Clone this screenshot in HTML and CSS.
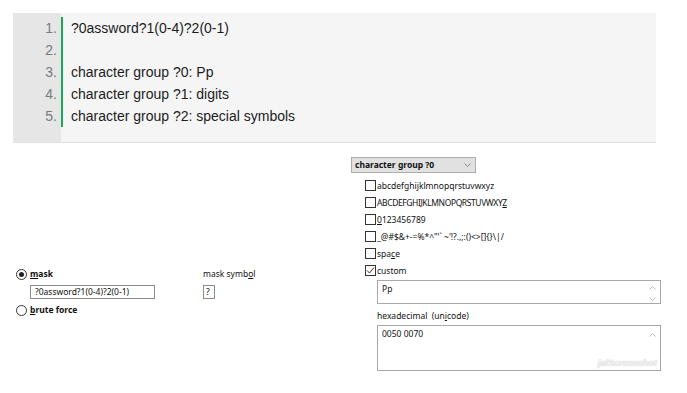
FILE: index.html
```html
<!DOCTYPE html>
<html>
<head>
<meta charset="utf-8">
<link rel="stylesheet" href="styles.css">
</head>
<body>
<div class="code">
  <div class="gutter">
    <div>1.</div><div>2.</div><div>3.</div><div>4.</div><div>5.</div>
  </div>
  <div class="lines">
    <div>?0assword?1(0-4)?2(0-1)</div>
    <div>&nbsp;</div>
    <div>character group ?0: Pp</div>
    <div>character group ?1: digits</div>
    <div>character group ?2: special symbols</div>
  </div>
</div>

<div class="lower">
  <div class="left">
    <div class="col-main">
      <div class="radio-row"><span class="radio checked"></span><b><u>m</u>ask</b></div>
      <div class="text-input wide">?0assword?1(0-4)?2(0-1)</div>
      <div class="radio-row"><span class="radio"></span><b><u>b</u>rute force</b></div>
    </div>
    <div class="col-sym">
      <div class="sym-label">mask symb<u>o</u>l</div>
      <div class="text-input tiny">?</div>
    </div>
  </div>

  <div class="right">
    <div class="select">
      <span>character group ?0</span>
      <svg class="chev" width="7" height="4" viewBox="0 0 7 4"><path d="M0.5 0.5 L3.5 3.5 L6.5 0.5" fill="none" stroke="#8a8a8a" stroke-width="1"/></svg>
    </div>
    <ul class="checks">
      <li><span class="cb"></span><span>abcdefghijklmnopqrstuvwxyz</span></li>
      <li><span class="cb"></span><span class="upper">ABCDEFGHIJKLMNOPQRSTUVWXY<u>Z</u></span></li>
      <li><span class="cb"></span><span><u>0</u>123456789</span></li>
      <li><span class="cb"></span><span>_@#$&amp;+-=%*^"'` ~'!?.,;:()&lt;&gt;[]{}\|/</span></li>
      <li><span class="cb"></span><span>spa<u>c</u>e</span></li>
      <li><span class="cb checked"><svg width="9" height="9" viewBox="0 0 9 9"><path d="M1 4.5 L3.5 7 L8 1.5" fill="none" stroke="#333" stroke-width="1"/></svg></span><span>custom</span></li>
    </ul>
    <div class="area short">
      <span>Pp</span>
      <div class="scroll">
        <svg width="7" height="4" viewBox="0 0 7 4"><path d="M0.5 3.5 L3.5 0.5 L6.5 3.5" fill="none" stroke="#bdbdbd"/></svg>
        <svg width="7" height="4" viewBox="0 0 7 4"><path d="M0.5 0.5 L3.5 3.5 L6.5 0.5" fill="none" stroke="#bdbdbd"/></svg>
      </div>
    </div>
    <div class="hex-label">hexadecimal&nbsp; (un<u>i</u>code)</div>
    <div class="area tall">
      <span>0050 0070</span>
      <div class="scroll">
        <svg width="7" height="4" viewBox="0 0 7 4"><path d="M0.5 3.5 L3.5 0.5 L6.5 3.5" fill="none" stroke="#bdbdbd"/></svg>
      </div>
      <span class="watermark">jalScreenshot</span>
    </div>
  </div>
</div>
</body>
</html>
```

FILE: styles.css
```css
html, body {
  margin: 0;
  padding: 0;
  background: #ffffff;
}

body {
  font-family: "Noto Sans", "Open Sans", sans-serif;
  color: #111111;
}

/* code block */
.code {
  display: flex;
  margin: 13px 31px 0 13px;
  background: #f5f5f5;
  border-bottom: 1px solid #e0e0e0;
  font: 14px/22px "Liberation Sans", Arial, sans-serif;
}

.gutter {
  width: 48px;
  box-sizing: border-box;
  background: #e6e6e6;
  padding: 4px 4px 15px 0;
  text-align: right;
  color: #7a7a7a;
}

.lines {
  flex: 1;
  margin: 4px 0 15px;
  padding-left: 8px;
  border-left: 2px solid #18a85a;
  color: #1c1c1c;
}

/* lower form */
.lower {
  display: flex;
  margin-top: 14px;
  font-size: 8.5px;
  line-height: 14px;
}

.left {
  width: 351px;
  box-sizing: border-box;
  padding: 110px 0 0 16px;
  display: flex;
}

.col-main {
  width: 187px;
}

.radio-row {
  display: flex;
  align-items: center;
  gap: 3px;
  height: 14px;
}

.radio {
  width: 11px;
  height: 11px;
  box-sizing: border-box;
  border: 1px solid #333;
  border-radius: 50%;
  background: #fff;
  display: flex;
  align-items: center;
  justify-content: center;
}

.radio.checked::after {
  content: "";
  width: 5px;
  height: 5px;
  border-radius: 50%;
  background: #222;
}

.text-input {
  height: 14px;
  box-sizing: border-box;
  border: 1px solid #8c8c8c;
  padding-left: 4px;
  line-height: 12px;
  background: #fff;
  margin: 4px 0;
}

.text-input.wide {
  width: 125px;
  margin-left: 14px;
}

.text-input.tiny {
  width: 12px;
  padding-left: 2px;
}

.sym-label {
  height: 14px;
}

.right {
  width: 310px;
}

.select {
  width: 125px;
  height: 16px;
  box-sizing: border-box;
  border: 1px solid #adadad;
  background: #e1e1e1;
  display: flex;
  align-items: center;
  justify-content: space-between;
  padding: 0 4px 0 3px;
  font-weight: bold;
}

.checks {
  list-style: none;
  margin: 4px 0 0 14px;
  padding: 0;
}

.checks li {
  height: 17px;
  display: flex;
  align-items: center;
  gap: 1px;
}

.upper {
  letter-spacing: -0.4px;
}

.cb {
  width: 11px;
  height: 11px;
  box-sizing: border-box;
  border: 1px solid #333;
  background: #fff;
  display: flex;
  align-items: center;
  justify-content: center;
}

.area {
  position: relative;
  margin-left: 26px;
  width: 284px;
  box-sizing: border-box;
  border: 1px solid #a8a8a8;
  padding: 2px 4px;
  line-height: 12px;
}

.area.short {
  height: 24px;
  margin-top: 1px;
}

.area.tall {
  height: 46px;
  margin-top: 2px;
}

.scroll {
  position: absolute;
  right: 4px;
  top: 5px;
  display: flex;
  flex-direction: column;
  gap: 7px;
}

.area.tall .scroll {
  top: 7px;
}

.hex-label {
  margin: 5px 0 0 26px;
  height: 14px;
}

.watermark {
  position: absolute;
  right: 3px;
  bottom: 2px;
  font: italic bold 9px "Liberation Sans", sans-serif;
  color: #f4f4f4;
  text-shadow: 0 0 1px #b0b0b0;
}
```
